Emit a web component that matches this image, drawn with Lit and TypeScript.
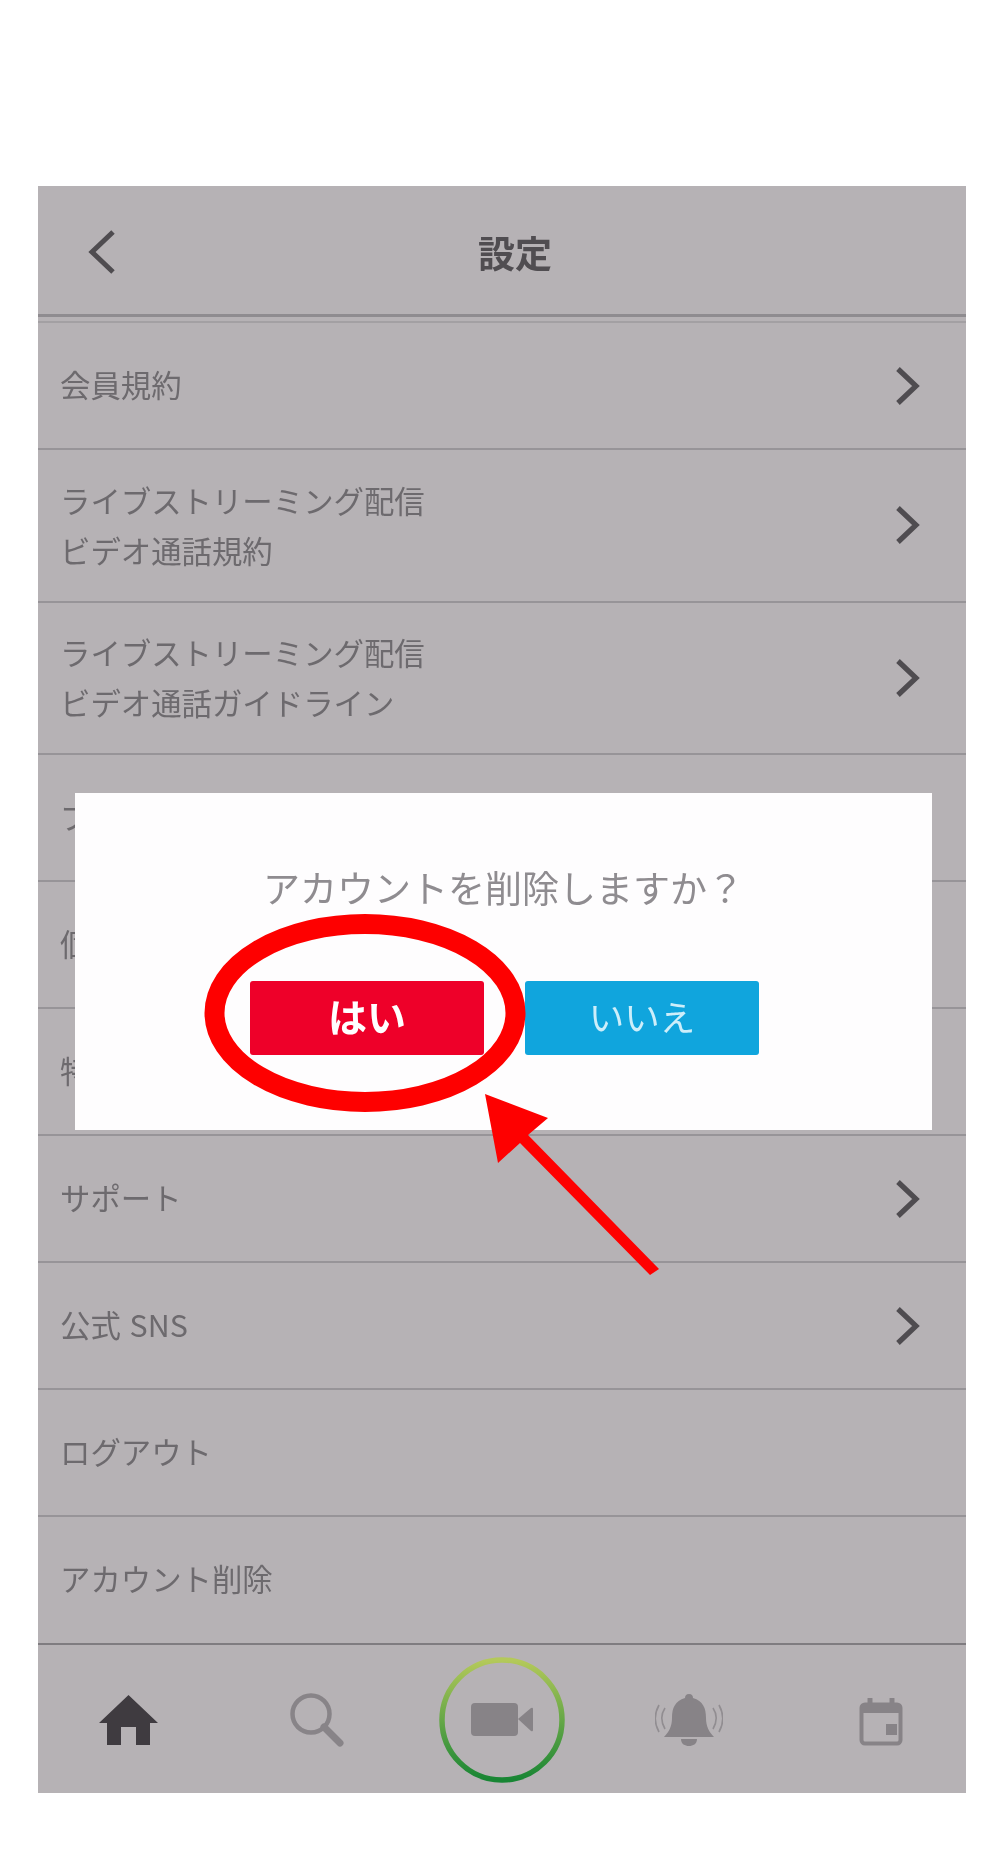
import { LitElement, html, css, svg } from "lit";
import { customElement } from "lit/decorators.js";

const ASK = "アカウントを削除しますか\uFF1F";

const rows: { lines: string[]; chevron: boolean; tall?: boolean }[] = [
  { lines: ["会員規約"], chevron: true },
  { lines: ["ライブストリーミング配信", "ビデオ通話規約"], chevron: true, tall: true },
  { lines: ["ライブストリーミング配信", "ビデオ通話ガイドライン"], chevron: true, tall: true },
  { lines: ["プライバシーポリシー"], chevron: true },
  { lines: ["個人情報の取扱い"], chevron: true },
  { lines: ["特定商取引法に基づく表記"], chevron: true },
  { lines: ["サポート"], chevron: true },
  { lines: ["公式 SNS"], chevron: true },
  { lines: ["ログアウト"], chevron: false },
  { lines: ["アカウント削除"], chevron: false },
];

const chevron = svg`<svg class="chev" width="26" height="38" viewBox="0 0 26 38"><path d="M3 2 L21 19 L3 36" fill="none" stroke="#4f4c50" stroke-width="5.2"/></svg>`;

@customElement("app-root")
export class AppRoot extends LitElement {
  static styles = css`
    :host {
      display: block;
      position: relative;
      height: 1860px;
      background: #fff;
      font-family: "Noto Sans CJK JP", "Noto Sans", sans-serif;
      overflow: hidden;
    }
    .page { padding: 186px 34px 0 38px; }
    .screen {
      position: relative;
      background: #b6b2b5;
      color: #6d6a6e;
      display: flex;
      flex-direction: column;
      height: 1607px;
      filter: blur(0.5px);
    }
    .header {
      height: 131px;
      flex: none;
      display: flex;
      align-items: center;
      padding-left: 49px;
      border-bottom: 3px solid #8f8c90;
      box-sizing: border-box;
    }
    .back { margin-top: 4px; }
    .title {
      flex: 1;
      text-align: center;
      font-size: 37px;
      font-weight: 700;
      color: #504d51;
      line-height: 1;
      margin-top: 5px;
    }
    .spacer { width: 53px; }
    .gap { height: 6px; flex: none; border-bottom: 2px solid #a3a0a3; box-sizing: border-box; }
    .list { flex: none; }
    .row {
      height: 127px;
      box-sizing: border-box;
      display: flex;
      align-items: center;
      justify-content: space-between;
      padding: 0 45px 0 22px;
      border-bottom: 2px solid #979498;
      font-size: 30.4px;
      line-height: 50px;
    }
    .label { margin-bottom: 4px; word-spacing: 2px; }
    .row.tall { height: 152.5px; }
    .row.tall .label { margin-bottom: 1px; }
    .row:last-child { height: 128px; border-bottom: 2px solid #7f7c80; }
    .nav {
      flex: 1;
      display: grid;
      grid-template-columns: 180px 198px 172px 202px 176px;
      align-items: center;
      justify-items: center;
      padding-top: 2px;
    }
    .nav svg { display: block; }
    .cal { margin-left: 6px; margin-top: 3px; }
    .modal {
      position: absolute;
      left: 37px;
      top: 607px;
      width: 857px;
      height: 337px;
      background: #fefdfe;
      display: flex;
      flex-direction: column;
      align-items: center;
    }
    .ask {
      margin-top: 67px;
      font-size: 37px;
      line-height: 54px;
      color: #8f8c90;
      white-space: nowrap;
    }
    .btns {
      margin-top: 67px;
      display: flex;
      gap: 41px;
      padding-left: 2px;
    }
    .btn {
      width: 234px;
      height: 74px;
      padding-bottom: 6px;
      box-sizing: border-box;
      border-radius: 3px;
      display: flex;
      align-items: center;
      justify-content: center;
      color: #fff;
    }
    .yes { background: #ee0029; font-size: 39px; font-weight: 700; }
    .no { background: #10a5dd; font-size: 35.5px; color: #cdeefa; }
    .marks { position: absolute; left: 0; top: 0; }
  `;

  render() {
    return html`
      <div class="page">
        <div class="screen">
          <div class="header">
            <svg class="back" width="30" height="44" viewBox="0 0 30 44"><path d="M26 2 L5 22 L26 42" fill="none" stroke="#4f4c50" stroke-width="5"/></svg>
            <div class="title">設定</div>
            <div class="spacer"></div>
          </div>
          <div class="gap"></div>
          <div class="list">
            ${rows.map(
              (r) => html`<div class="row ${r.tall ? "tall" : ""}">
                <div class="label">${r.lines.map((l) => html`<div>${l}</div>`)}</div>
                ${r.chevron ? chevron : ""}
              </div>`
            )}
          </div>
          <div class="nav">
            <svg width="59" height="50" viewBox="0 0 59 50"><path d="M29.5 0 L59 28 H51 V50 H37 V32 H22 V50 H8 V28 H0 Z" fill="#3f3b40"/></svg>
            <svg width="54" height="54" viewBox="0 0 54 54"><circle cx="21" cy="21" r="18.5" fill="none" stroke="#888488" stroke-width="4.5"/><path d="M34 34 L50 50" stroke="#888488" stroke-width="7" stroke-linecap="round"/></svg>
            <svg width="126" height="126" viewBox="0 0 126 126">
              <defs><linearGradient id="rg" x1="0" y1="0" x2="0" y2="1"><stop offset="0" stop-color="#b4c95a"/><stop offset="1" stop-color="#188534"/></linearGradient></defs>
              <circle cx="63" cy="63" r="60" fill="none" stroke="url(#rg)" stroke-width="5.5"/>
              <rect x="32" y="46" width="47" height="33" rx="4" fill="#878387"/>
              <path d="M79 62 L92 51 Q94 50 94 52 V73 Q94 75 92 74 Z" fill="#878387"/>
            </svg>
            <svg width="68" height="52" viewBox="0 0 68 52">
              <path d="M34 0 C31 0 30 2 30 4 C20 7 17 14 17 24 C17 32 14 38 9 43 H59 C54 38 51 32 51 24 C51 14 48 7 38 4 C38 2 37 0 34 0 Z M26 45 H42 C42 50 38 52 34 52 C30 52 26 50 26 45 Z" fill="#878387"/>
              <path d="M10 14 C6 20 6 28 10 35 M4 11 C-1 20 -1 29 4 38 M58 14 C62 20 62 28 58 35 M64 11 C69 20 69 29 64 38" fill="none" stroke="#918d91" stroke-width="1.6"/>
            </svg>
            <svg class="cal" width="44" height="48" viewBox="0 0 44 48">
              <path d="M11 1 V6 M33 1 V6" stroke="#878387" stroke-width="5" stroke-linecap="round"/>
              <rect x="2.5" y="6.5" width="39" height="39" rx="3.5" fill="none" stroke="#878387" stroke-width="4"/>
              <rect x="3" y="6" width="38" height="9" fill="#878387"/>
              <rect x="27" y="26" width="11" height="11" fill="#878387"/>
            </svg>
          </div>
          <div class="modal">
            <div class="ask">${ASK}</div>
            <div class="btns">
              <div class="btn yes">はい</div>
              <div class="btn no">いいえ</div>
            </div>
          </div>
        </div>
      </div>
      <svg class="marks" width="1000" height="1860" viewBox="0 0 1000 1860">
        <ellipse cx="365" cy="1013" rx="150.5" ry="89" fill="none" stroke="#fe0000" stroke-width="20"/>
        <path d="M485 1094 L548 1118 L528 1135 L659 1269 L650 1275 L520 1143 L498 1163 Z" fill="#fe0000"/>
      </svg>
    `;
  }
}
